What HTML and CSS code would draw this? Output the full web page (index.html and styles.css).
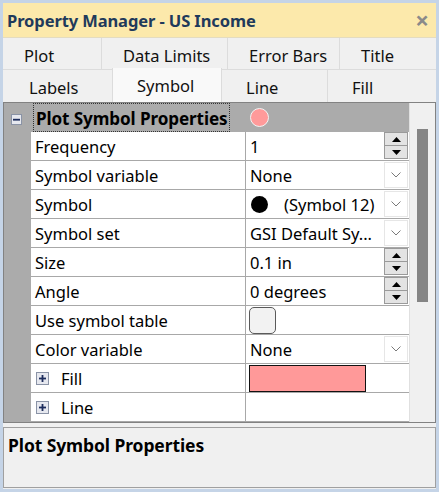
FILE: index.html
```html
<!DOCTYPE html>
<html>
<head>
<meta charset="utf-8">
<link rel="stylesheet" href="styles.css">
</head>
<body>
<div class="window">
  <div class="inner">
    <div class="titlebar">
      <span class="title">Property Manager - US Income</span>
      <span class="close">×</span>
    </div>
    <div class="tabs">
      <div class="tabrow row1">
        <div class="tab t-plot">Plot</div>
        <div class="tab t-limits">Data Limits</div>
        <div class="tab t-err">Error Bars</div>
        <div class="tab t-title">Title</div>
      </div>
      <div class="tabrow row2">
        <div class="tab t-labels">Labels</div>
        <div class="tab t-symbol selected">Symbol</div>
        <div class="tab t-line">Line</div>
        <div class="tab t-fill">Fill</div>
      </div>
    </div>
    <div class="grid">
      <div class="rows">
        <div class="row header">
          <div class="gutter">
            <span class="expander"><svg width="11" height="11" viewBox="0 0 11 11"><rect x="0.5" y="0.5" width="10" height="10" fill="#e6e8ef" stroke="#8a93a6"/><rect x="2" y="4.8" width="7" height="1.8" fill="#1c2c5c"/></svg></span>
          </div>
          <div class="head-label"><span class="focus">Plot Symbol Properties</span></div>
          <div class="head-value"><span class="dot-pink"></span></div>
        </div>

        <div class="row">
          <div class="gutter"></div>
          <div class="label">Frequency</div>
          <div class="value"><span class="vtext">1</span>
            <span class="spin"><span class="spin-up"><svg width="9" height="5" viewBox="0 0 9 5"><polygon points="0,5 9,5 4.5,0" fill="#000"/></svg></span><span class="spin-down"><svg width="9" height="5" viewBox="0 0 9 5"><polygon points="0,0 9,0 4.5,5" fill="#000"/></svg></span></span>
          </div>
        </div>

        <div class="row">
          <div class="gutter"></div>
          <div class="label">Symbol variable</div>
          <div class="value"><span class="vtext">None</span>
            <span class="drop"><svg width="10" height="6" viewBox="0 0 10 6"><polyline points="0.5,0.5 5,5 9.5,0.5" fill="none" stroke="#7a7a7a" stroke-width="1"/></svg></span>
          </div>
        </div>

        <div class="row">
          <div class="gutter"></div>
          <div class="label">Symbol</div>
          <div class="value"><span class="vtext"><span class="dot-black"></span><span class="symname">(Symbol 12)</span></span>
            <span class="drop"><svg width="10" height="6" viewBox="0 0 10 6"><polyline points="0.5,0.5 5,5 9.5,0.5" fill="none" stroke="#7a7a7a" stroke-width="1"/></svg></span>
          </div>
        </div>

        <div class="row">
          <div class="gutter"></div>
          <div class="label">Symbol set</div>
          <div class="value"><span class="vtext">GSI Default Sy...</span>
            <span class="drop"><svg width="10" height="6" viewBox="0 0 10 6"><polyline points="0.5,0.5 5,5 9.5,0.5" fill="none" stroke="#7a7a7a" stroke-width="1"/></svg></span>
          </div>
        </div>

        <div class="row">
          <div class="gutter"></div>
          <div class="label">Size</div>
          <div class="value"><span class="vtext">0.1 in</span>
            <span class="spin"><span class="spin-up"><svg width="9" height="5" viewBox="0 0 9 5"><polygon points="0,5 9,5 4.5,0" fill="#000"/></svg></span><span class="spin-down"><svg width="9" height="5" viewBox="0 0 9 5"><polygon points="0,0 9,0 4.5,5" fill="#000"/></svg></span></span>
          </div>
        </div>

        <div class="row">
          <div class="gutter"></div>
          <div class="label">Angle</div>
          <div class="value"><span class="vtext">0 degrees</span>
            <span class="spin"><span class="spin-up"><svg width="9" height="5" viewBox="0 0 9 5"><polygon points="0,5 9,5 4.5,0" fill="#000"/></svg></span><span class="spin-down"><svg width="9" height="5" viewBox="0 0 9 5"><polygon points="0,0 9,0 4.5,5" fill="#000"/></svg></span></span>
          </div>
        </div>

        <div class="row">
          <div class="gutter"></div>
          <div class="label">Use symbol table</div>
          <div class="value"><span class="checkbox"></span></div>
        </div>

        <div class="row">
          <div class="gutter"></div>
          <div class="label">Color variable</div>
          <div class="value"><span class="vtext">None</span>
            <span class="drop"><svg width="10" height="6" viewBox="0 0 10 6"><polyline points="0.5,0.5 5,5 9.5,0.5" fill="none" stroke="#7a7a7a" stroke-width="1"/></svg></span>
          </div>
        </div>

        <div class="row">
          <div class="gutter"></div>
          <div class="label sub"><span class="plus"><svg width="13" height="13" viewBox="0 0 13 13"><rect x="0.5" y="0.5" width="12" height="12" fill="#e6e8ef" stroke="#8a93a6"/><rect x="3" y="5.6" width="7" height="1.8" fill="#1c2c5c"/><rect x="5.6" y="3" width="1.8" height="7" fill="#1c2c5c"/></svg></span>Fill</div>
          <div class="value"><span class="swatch"></span></div>
        </div>

        <div class="row">
          <div class="gutter"></div>
          <div class="label sub"><span class="plus"><svg width="13" height="13" viewBox="0 0 13 13"><rect x="0.5" y="0.5" width="12" height="12" fill="#e6e8ef" stroke="#8a93a6"/><rect x="3" y="5.6" width="7" height="1.8" fill="#1c2c5c"/><rect x="5.6" y="3" width="1.8" height="7" fill="#1c2c5c"/></svg></span>Line</div>
          <div class="value"></div>
        </div>
      </div>
      <div class="scroll"><div class="thumb"></div></div>
    </div>
    <div class="desc">Plot Symbol Properties</div>
  </div>
</div>
</body>
</html>
```
FILE: styles.css
```css
* { box-sizing: border-box; }
html, body { margin: 0; padding: 0; }
body {
  font-family: "Noto Sans", "Open Sans", sans-serif;
  font-size: 16.5px;
  color: #000;
  background: #c5d4e7;
}
.window {
  width: 439px;
  height: 492px;
  padding: 3px;
  background: #c5d4e7;
}
.inner {
  height: 486px;
  background: #f0f0f0;
  display: flex;
  flex-direction: column;
}
.titlebar {
  height: 35px;
  background: #fce9ab;
  display: flex;
  align-items: center;
  justify-content: space-between;
  padding: 0 7px 0 4px;
  border-bottom: 1px solid #e4dcc0;
}
.title {
  font-weight: bold;
  font-size: 16.5px;
  color: #1f3a5b;
  letter-spacing: -0.1px;
}
.close {
  color: #8a8a8a;
  font-size: 24px;
  line-height: 1;
  font-weight: bold;
}
.tabs {
  height: 64px;
  display: flex;
  flex-direction: column;
}
.tabrow {
  height: 32px;
  display: flex;
}
.row1 { border-bottom: 1px solid #dcdcdc; }
.tab {
  height: 100%;
  display: flex;
  align-items: center;
  border-right: 1px solid #dcdcdc;
  font-size: 16.5px;
  color: #111;
}
.row1 .tab { padding-left: 21px; padding-top: 3px; }
.row2 .tab { padding-left: 24px; padding-top: 3px; }
.t-plot { width: 99px; }
.t-limits { width: 126px; }
.t-err { width: 112px; }
.t-title { flex: 1; border-right: none; }
.t-labels { width: 110px; padding-left: 26px !important; }
.t-symbol { width: 110px; }
.t-line { width: 106px; }
.t-fill { flex: 1; border-right: none; }
.tab.selected {
  background: #f9f9f9;
  margin-top: -2px;
  height: 34px;
  padding-top: 0 !important;
  border-left: 1px solid #dcdcdc;
  margin-left: -1px;
}
.grid {
  height: 321px;
  border: 1px solid #828282;
  display: flex;
  background: #fff;
}
.rows {
  width: 405px;
  display: flex;
  flex-direction: column;
}
.row {
  height: 29px;
  display: flex;
  flex: none;
}
.gutter {
  width: 27px;
  background: #ababab;
  display: flex;
  align-items: center;
  padding-left: 7px;
}
.row .label {
  width: 215px;
  border-bottom: 1px solid #a8a8a8;
  border-right: 1px solid #a8a8a8;
  padding-left: 4px;
  padding-top: 1px;
  display: flex;
  align-items: center;
}
.row .value {
  flex: 1;
  border-bottom: 1px solid #a8a8a8;
  display: flex;
  align-items: center;
  justify-content: space-between;
  padding-left: 4px;
  padding-right: 1px;
}
.vtext { display: flex; align-items: center; padding-top: 1px; }
.row.header { background: #ababab; }
.row.header .gutter { padding-top: 2px; }
.head-label {
  width: 216px;
  display: flex;
  align-items: stretch;
  padding-left: 2px;
  padding-right: 17px;
}
.focus {
  flex: 1;
  display: flex;
  align-items: center;
  padding-left: 2px;
  padding-top: 1px;
  font-weight: bold;
  font-size: 17.1px;
  letter-spacing: -0.1px;
  border: 1px dotted #333;
  white-space: nowrap;
}
.head-value {
  flex: 1;
  display: flex;
  align-items: center;
  padding-left: 3px;
}
.dot-pink {
  width: 19px;
  height: 19px;
  border-radius: 50%;
  background: #ff9a9a;
  border: 1.5px solid #f4f4f4;
}
.dot-black {
  width: 17px;
  height: 17px;
  border-radius: 50%;
  background: #000;
  margin-left: 1px;
  margin-right: 16px;
}
.spin {
  width: 24px;
  height: 27px;
  display: flex;
  flex-direction: column;
  border: 1px solid #9a9a9a;
  background: #e3e3e3;
  margin-bottom: 1px;
}
.spin-up, .spin-down {
  flex: 1;
  display: flex;
  align-items: center;
  justify-content: center;
}
.spin-up { border-bottom: 1px solid #9a9a9a; }
.drop {
  width: 24px;
  height: 26px;
  border: 1px solid #e6e6e6;
  background: #fff;
  display: flex;
  align-items: center;
  justify-content: center;
  margin-bottom: 1px;
}
.checkbox {
  width: 27px;
  height: 27px;
  border: 1.5px solid #5a5a5a;
  border-radius: 5px;
  background: #f2f2f2;
  margin-left: -1px;
}
.swatch {
  width: 117px;
  height: 27px;
  background: #ff9999;
  border: 1px solid #111;
  margin-left: -1px;
}
.label.sub { padding-left: 5px; }
.plus {
  display: flex;
  margin-right: 12px;
}
.scroll {
  flex: 1;
  background: #f0f0f0;
  border-left: 1px solid #e0e0e0;
  padding: 26px 0 0 7px;
}
.thumb {
  width: 11px;
  height: 173px;
  background: #858585;
}
.desc {
  margin-top: 4px;
  height: 61px;
  border: 1px solid #a0a0a0;
  background: #f0f0f0;
  font-weight: bold;
  font-size: 17.5px;
  padding: 5px 0 0 4px;
  letter-spacing: -0.1px;
}
```
